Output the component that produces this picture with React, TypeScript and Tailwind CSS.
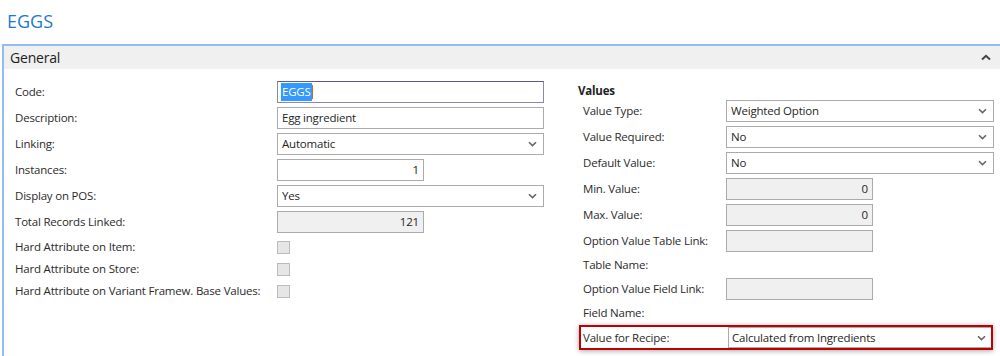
import type { ReactNode } from "react";

const font = { fontFamily: '"Open Sans", "Noto Sans", sans-serif' };

function Chevron() {
  return (
    <svg width="9" height="6" viewBox="0 0 9 6" className="shrink-0">
      <path d="M1 1.2 L4.5 4.6 L8 1.2" fill="none" stroke="#666" strokeWidth="1.6" />
    </svg>
  );
}

function TextBox({ value, wide = true, align = "left", disabled = false }: { value?: string; wide?: boolean; align?: "left" | "right"; disabled?: boolean }) {
  return (
    <div
      className={`flex h-[22px] items-center border border-[#ababab] px-[4px] text-[11.5px] tracking-[-0.2px] text-[#262626] ${wide ? "w-[267px]" : "w-[147px]"} ${align === "right" ? "justify-end" : ""} ${disabled ? "bg-[#f0f0f0]" : "bg-white"}`}
    >
      {value}
    </div>
  );
}

function SelectBox({ value, className = "" }: { value: string; className?: string }) {
  return (
    <div className={`flex h-[22px] w-[267px] items-center justify-between border border-[#ababab] bg-white pl-[4px] pr-[6px] text-[11.5px] tracking-[-0.2px] text-[#262626] ${className}`}>
      <span>{value}</span>
      <Chevron />
    </div>
  );
}

function Row({ label, children, labelWidth }: { label: string; children?: ReactNode; labelWidth: string }) {
  return (
    <div className="flex h-[22px] items-center">
      <div className={`${labelWidth} shrink-0 whitespace-nowrap text-[11.5px] tracking-[-0.2px] text-[#2b2b2b]`}>{label}</div>
      {children}
    </div>
  );
}

function CheckRow({ label }: { label: string }) {
  return (
    <div className="flex h-[22px] items-center">
      <div className="w-[262px] shrink-0 whitespace-nowrap text-[11.5px] tracking-[-0.2px] text-[#2b2b2b]">{label}</div>
      <div className="h-[13px] w-[13px] border border-[#bcbcbc] bg-[#e6e6e6]" />
    </div>
  );
}

export default function App() {
  return (
    <div className="h-[356px] w-[1000px] overflow-hidden bg-white" style={font}>
      <div className="h-[44px] pl-[7px] pt-[8px] text-[18px] leading-[26px] text-[#1e78d2]">EGGS</div>
      <div className="ml-[2px] h-[312px] border-l-2 border-t-2 border-[#93bdf0]">
        <div className="flex h-[23px] items-center justify-between bg-[#f0f0f0] pl-[6px] pr-[9px]">
          <span className="text-[14px] tracking-[-0.2px] text-[#222]">General</span>
          <svg width="10" height="7" viewBox="0 0 10 7">
            <path d="M1 5.5 L5 1.8 L9 5.5" fill="none" stroke="#444" strokeWidth="2" />
          </svg>
        </div>
        <div className="flex">
          {/* left column */}
          <div className="flex w-[574px] shrink-0 flex-col gap-[4px] pl-[11px] pt-[12px]">
            <Row label="Code:" labelWidth="w-[262px]">
              <div className="flex h-[22px] w-[267px] items-center border border-[#8a8aa8] border-t-[#5b5b84] bg-white px-[3px] text-[11.5px] tracking-[-0.2px]">
                <span className="bg-[#3399ff] px-[1px] text-white">EGGS</span>
                <span className="h-[14px] w-[1px] bg-[#c86a2a]" />
              </div>
            </Row>
            <Row label="Description:" labelWidth="w-[262px]">
              <TextBox value="Egg ingredient" />
            </Row>
            <Row label="Linking:" labelWidth="w-[262px]">
              <SelectBox value="Automatic" />
            </Row>
            <Row label="Instances:" labelWidth="w-[262px]">
              <TextBox value="1" wide={false} align="right" />
            </Row>
            <Row label="Display on POS:" labelWidth="w-[262px]">
              <SelectBox value="Yes" />
            </Row>
            <Row label="Total Records Linked:" labelWidth="w-[262px]">
              <TextBox value="121" wide={false} align="right" disabled />
            </Row>
            <div className="-mt-[1px] flex flex-col">
              <CheckRow label="Hard Attribute on Item:" />
              <CheckRow label="Hard Attribute on Store:" />
              <CheckRow label="Hard Attribute on Variant Framew. Base Values:" />
            </div>
          </div>

          {/* right column */}
          <div className="flex flex-col pt-[12px]">
            <div className="h-[19px] text-[11.5px] font-bold leading-[19px] tracking-[-0.2px] text-[#222]">Values</div>
            <div className="flex flex-col gap-[4px] pl-[5px]">
              <Row label="Value Type:" labelWidth="w-[143px]">
                <SelectBox value="Weighted Option" className="w-[268px]" />
              </Row>
              <Row label="Value Required:" labelWidth="w-[143px]">
                <SelectBox value="No" className="w-[268px]" />
              </Row>
              <Row label="Default Value:" labelWidth="w-[143px]">
                <SelectBox value="No" className="w-[268px]" />
              </Row>
              <Row label="Min. Value:" labelWidth="w-[143px]">
                <TextBox value="0" wide={false} align="right" disabled />
              </Row>
              <Row label="Max. Value:" labelWidth="w-[143px]">
                <TextBox value="0" wide={false} align="right" disabled />
              </Row>
              <Row label="Option Value Table Link:" labelWidth="w-[143px]">
                <TextBox wide={false} disabled />
              </Row>
              <div className="flex h-[18px] items-center text-[11.5px] tracking-[-0.2px] text-[#2b2b2b]">Table Name:</div>
              <Row label="Option Value Field Link:" labelWidth="w-[143px]">
                <TextBox wide={false} disabled />
              </Row>
              <div className="flex h-[18px] items-center text-[11.5px] tracking-[-0.2px] text-[#2b2b2b]">Field Name:</div>
              <div className="-ml-[4px] -mt-[1px] flex h-[25px] w-[414px] items-center border-2 border-[#c00000] pl-[2px] shadow-[0_1px_5px_rgba(0,0,0,0.35)]">
                <div className="w-[145px] shrink-0 text-[11.5px] tracking-[-0.2px] text-[#2b2b2b]">Value for Recipe:</div>
                <div className="flex h-[21px] flex-1 items-center justify-between border border-r-0 border-[#ababab] bg-white pl-[3px] pr-[5px] text-[11.5px] tracking-[-0.2px] text-[#262626]">
                  <span>Calculated from Ingredients</span>
                  <Chevron />
                </div>
              </div>
            </div>
          </div>
        </div>
      </div>
    </div>
  );
}
